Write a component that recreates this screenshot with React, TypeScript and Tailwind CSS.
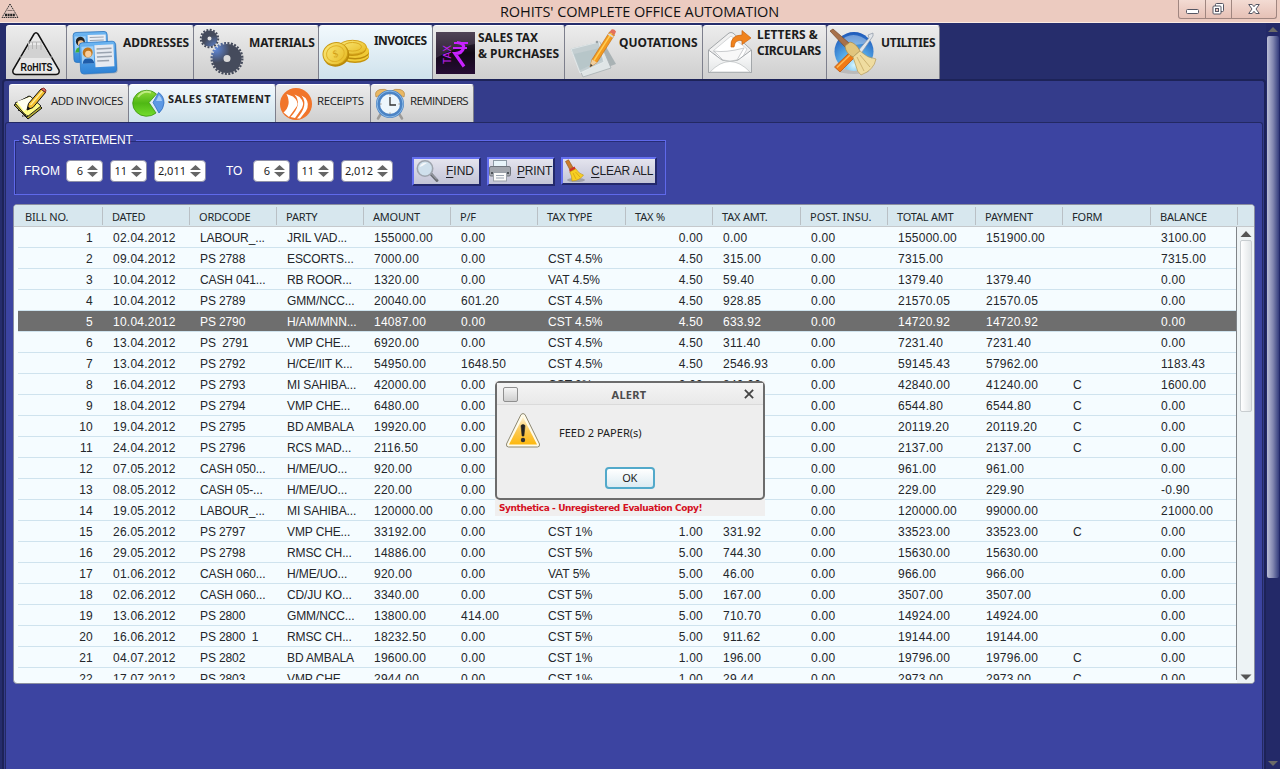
import type { ReactNode } from "react";

type Align = "l" | "r";

const columns: { title: string; width: string; align: Align }[] = [
  { title: "BILL NO.", width: "w-[85px]", align: "r" },
  { title: "DATED", width: "w-[87px]", align: "l" },
  { title: "ORDCODE", width: "w-[87px]", align: "l" },
  { title: "PARTY", width: "w-[87px]", align: "l" },
  { title: "AMOUNT", width: "w-[87px]", align: "l" },
  { title: "P/F", width: "w-[87px]", align: "l" },
  { title: "TAX TYPE", width: "w-[88px]", align: "l" },
  { title: "TAX %", width: "w-[87px]", align: "r" },
  { title: "TAX AMT.", width: "w-[88px]", align: "l" },
  { title: "POST. INSU.", width: "w-[87px]", align: "l" },
  { title: "TOTAL AMT", width: "w-[88px]", align: "l" },
  { title: "PAYMENT", width: "w-[87px]", align: "l" },
  { title: "FORM", width: "w-[88px]", align: "l" },
  { title: "BALANCE", width: "w-[87px]", align: "l" },
];

const rows: string[][] = [
  ["1", "02.04.2012", "LABOUR_...", "JRIL VAD...", "155000.00", "0.00", "", "0.00", "0.00", "0.00", "155000.00", "151900.00", "", "3100.00"],
  ["2", "09.04.2012", "PS 2788", "ESCORTS...", "7000.00", "0.00", "CST 4.5%", "4.50", "315.00", "0.00", "7315.00", "", "", "7315.00"],
  ["3", "10.04.2012", "CASH 041...", "RB ROOR...", "1320.00", "0.00", "VAT 4.5%", "4.50", "59.40", "0.00", "1379.40", "1379.40", "", "0.00"],
  ["4", "10.04.2012", "PS 2789", "GMM/NCC...", "20040.00", "601.20", "CST 4.5%", "4.50", "928.85", "0.00", "21570.05", "21570.05", "", "0.00"],
  ["5", "10.04.2012", "PS 2790", "H/AM/MNN...", "14087.00", "0.00", "CST 4.5%", "4.50", "633.92", "0.00", "14720.92", "14720.92", "", "0.00"],
  ["6", "13.04.2012", "PS  2791", "VMP CHE...", "6920.00", "0.00", "CST 4.5%", "4.50", "311.40", "0.00", "7231.40", "7231.40", "", "0.00"],
  ["7", "13.04.2012", "PS 2792", "H/CE/IIT K...", "54950.00", "1648.50", "CST 4.5%", "4.50", "2546.93", "0.00", "59145.43", "57962.00", "", "1183.43"],
  ["8", "16.04.2012", "PS 2793", "MI SAHIBA...", "42000.00", "0.00", "CST 2%", "2.00", "840.00", "0.00", "42840.00", "41240.00", "C", "1600.00"],
  ["9", "18.04.2012", "PS 2794", "VMP CHE...", "6480.00", "0.00", "", "", "", "0.00", "6544.80", "6544.80", "C", "0.00"],
  ["10", "19.04.2012", "PS 2795", "BD AMBALA", "19920.00", "0.00", "", "", "", "0.00", "20119.20", "20119.20", "C", "0.00"],
  ["11", "24.04.2012", "PS 2796", "RCS MAD...", "2116.50", "0.00", "", "", "", "0.00", "2137.00", "2137.00", "C", "0.00"],
  ["12", "07.05.2012", "CASH 050...", "H/ME/UO...", "920.00", "0.00", "", "", "", "0.00", "961.00", "961.00", "", "0.00"],
  ["13", "08.05.2012", "CASH 05-...", "H/ME/UO...", "220.00", "0.00", "", "", "", "0.00", "229.00", "229.90", "", "-0.90"],
  ["14", "19.05.2012", "LABOUR_...", "MI SAHIBA...", "120000.00", "0.00", "", "", "", "0.00", "120000.00", "99000.00", "", "21000.00"],
  ["15", "26.05.2012", "PS 2797", "VMP CHE...", "33192.00", "0.00", "CST 1%", "1.00", "331.92", "0.00", "33523.00", "33523.00", "C", "0.00"],
  ["16", "29.05.2012", "PS 2798", "RMSC CH...", "14886.00", "0.00", "CST 5%", "5.00", "744.30", "0.00", "15630.00", "15630.00", "", "0.00"],
  ["17", "01.06.2012", "CASH 060...", "H/ME/UO...", "920.00", "0.00", "VAT 5%", "5.00", "46.00", "0.00", "966.00", "966.00", "", "0.00"],
  ["18", "02.06.2012", "CASH 060...", "CD/JU KO...", "3340.00", "0.00", "CST 5%", "5.00", "167.00", "0.00", "3507.00", "3507.00", "", "0.00"],
  ["19", "13.06.2012", "PS 2800", "GMM/NCC...", "13800.00", "414.00", "CST 5%", "5.00", "710.70", "0.00", "14924.00", "14924.00", "", "0.00"],
  ["20", "16.06.2012", "PS 2800  1", "RMSC CH...", "18232.50", "0.00", "CST 5%", "5.00", "911.62", "0.00", "19144.00", "19144.00", "", "0.00"],
  ["21", "04.07.2012", "PS 2802", "BD AMBALA", "19600.00", "0.00", "CST 1%", "1.00", "196.00", "0.00", "19796.00", "19796.00", "C", "0.00"],
  ["22", "17.07.2012", "PS 2803", "VMP CHE...", "2944.00", "0.00", "CST 1%", "1.00", "29.44", "0.00", "2973.00", "2973.00", "C", "0.00"],
];

function RohitsLogo() {
  return (
    <svg width="60" height="54" viewBox="6 25 60 54" className="shrink-0">
      <path d="M34 34Q36 31.500 38 34L59 70Q60 74 56 74.500H16Q12 74 13 70Z" fill="#e9e9e9" stroke="#111" strokeWidth="1.500" />
      <path d="M22.500 56L29 45H43L49.500 56Z" fill="#d2d2d2" />
      <path d="M28.500 50V42H32.500V49M32.500 42H36.500V49M36.500 42H41V50" fill="none" stroke="#b5b5b5" strokeWidth="1" />
      <path d="M20 57H52" stroke="#bbb" />
      <text x="20.500" y="70.500" fontSize="11" fontWeight="700" fontFamily="Liberation Sans, sans-serif" textLength="32" lengthAdjust="spacingAndGlyphs" fill="#111">RoHITS</text>
    </svg>
  );
}

function AddressIcon() {
  return (
    <svg width="52" height="54" viewBox="67 25 52 54" className="shrink-0">
      <defs>
        <linearGradient id="card" x1="0" y1="0" x2="0" y2="1">
          <stop offset="0" stopColor="#6db6f2" />
          <stop offset="1" stopColor="#2f83d6" />
        </linearGradient>
      </defs>
      <g transform="rotate(-2 90 46)">
        <rect x="73.500" y="32" width="34" height="30" rx="3" fill="url(#card)" stroke="#2b74bd" strokeWidth=".8" />
        <rect x="88" y="35" width="18" height="10" fill="#e9eef5" />
        <path d="M90 37.500H104M90 40.500H104" stroke="#9aa3b0" strokeWidth="1.200" />
        <rect x="75" y="36" width="11" height="16" fill="#9fd0f7" />
        <circle cx="80.500" cy="41" r="4.500" fill="#232323" />
        <circle cx="81" cy="43" r="3" fill="#f0c08d" />
        <path d="M75 52Q76 46 82 47V52Z" fill="#3fae3b" />
      </g>
      <g transform="rotate(-3 98 58)">
        <rect x="81" y="43" width="36" height="31" rx="3" fill="#5a7fa8" opacity=".5" />
        <rect x="80" y="42" width="36" height="31" rx="3" fill="url(#card)" stroke="#2d7bc8" strokeWidth=".8" />
        <rect x="95" y="45" width="19" height="22" fill="#e6eaf1" />
        <rect x="82" y="46" width="12" height="17" fill="#9fd0f7" />
        <path d="M97 49H112M97 53H112M97 57H112M97 61H109" stroke="#9aa3b0" strokeWidth="1.500" />
        <circle cx="88" cy="52" r="5" fill="#c2761c" />
        <circle cx="88.500" cy="53.500" r="3.200" fill="#f9cd9b" />
        <path d="M82.500 63Q83 57.500 88 58Q93.500 57.500 94 63Z" fill="#1f5ca8" />
      </g>
    </svg>
  );
}

function GearsIcon() {
  return (
    <svg width="52" height="54" viewBox="194 25 52 54" className="shrink-0">
      <defs>
        <radialGradient id="gearshine" cx="216" cy="49" r="14" gradientUnits="userSpaceOnUse">
          <stop offset="0" stopColor="#5f88da" />
          <stop offset="1" stopColor="#454b5c" />
        </radialGradient>
      </defs>
      <circle cx="209.500" cy="38.500" r="5" fill="none" stroke="url(#gearshine)" strokeWidth="6" />
      <circle cx="209.500" cy="38.500" r="8.700" fill="none" stroke="#454b5c" strokeWidth="2" strokeDasharray="1.900 1.516" />
      <circle cx="227" cy="58.500" r="9" fill="none" stroke="url(#gearshine)" strokeWidth="11" />
      <circle cx="227" cy="58.500" r="15.300" fill="none" stroke="url(#gearshine)" strokeWidth="2.400" strokeDasharray="2 1.433" />
    </svg>
  );
}

function CoinsIcon() {
  return (
    <svg width="52" height="54" viewBox="319 25 52 54" className="shrink-0">
      <defs>
        <linearGradient id="coin" x1="0" y1="0" x2="1" y2="1">
          <stop offset="0" stopColor="#fbea7c" />
          <stop offset="1" stopColor="#e6b81e" />
        </linearGradient>
      </defs>
      <ellipse cx="355" cy="56" rx="14" ry="7" fill="#c6940c" />
      <ellipse cx="355" cy="54.500" rx="14" ry="7" fill="#f1cc3a" />
      <ellipse cx="355" cy="52.500" rx="14" ry="7" fill="#bb8b0c" />
      <ellipse cx="355" cy="51" rx="14" ry="7" fill="#f0c935" />
      <ellipse cx="352" cy="49" rx="14" ry="7" fill="#c6940c" />
      <ellipse cx="352.500" cy="47.300" rx="14" ry="7" fill="url(#coin)" stroke="#d3a11b" />
      <ellipse cx="352.500" cy="46.800" rx="9" ry="4.300" fill="none" stroke="#dba91e" />
      <g transform="rotate(-17 336 54)">
        <ellipse cx="336" cy="55.500" rx="13" ry="11" fill="#b98908" />
        <ellipse cx="335.500" cy="53.500" rx="12.500" ry="11" fill="url(#coin)" stroke="#c99a14" />
        <ellipse cx="335.500" cy="53.500" rx="9" ry="7.800" fill="none" stroke="#e0b229" />
        <text x="333" y="57" fontSize="10" fontFamily="Liberation Serif, serif" fill="#d19d14">$</text>
      </g>
    </svg>
  );
}

function TaxIcon() {
  return (
    <svg width="43" height="54" viewBox="433 25 43 54" className="shrink-0">
      <defs>
        <linearGradient id="taxbg" x1="0" y1="0" x2="0" y2="1">
          <stop offset="0" stopColor="#3b3140" />
          <stop offset=".5" stopColor="#120816" />
          <stop offset="1" stopColor="#260c35" />
        </linearGradient>
      </defs>
      <rect x="436" y="32" width="39" height="42" fill="url(#taxbg)" />
      <path d="M436 32H475V44Q455 47 436 58Z" fill="#80708a" opacity=".3" />
      <g fill="none" stroke="#c822ff">
        <path d="M454 43H468M453 48H467" strokeWidth="2" />
        <path d="M457 42.500Q464.500 43 463.500 48Q462 53.500 455 53.500L464 66.500" strokeWidth="3.200" />
      </g>
      <text transform="translate(450.500 64) rotate(-90)" fontSize="10" fontFamily="Liberation Sans, sans-serif" fill="#c020f0" textLength="19">TAX</text>
    </svg>
  );
}

function NotesIcon() {
  return (
    <svg width="52" height="54" viewBox="565 25 52 54" className="shrink-0">
      <path d="M580 52L605 45L616 64L589 74Z" fill="#a9b2b4" />
      <path d="M571 49L600 42L611 68L583 77Z" fill="#dfe5e6" stroke="#a7b0b2" strokeWidth=".8" />
      <path d="M571 49L599 42L604 62L580 73Z" fill="#c3ced1" stroke="#e9eff0" strokeWidth=".8" />
      <path d="M574 54L600 48L602 60L580 70Z" fill="#acbdc2" opacity=".5" />
      <path d="M590 67L592 59.500L609.500 32L614.500 35L597 62.500Z" fill="#f39a1f" stroke="#bf6c10" strokeWidth=".6" />
      <path d="M594 60.500L611.500 33.200" stroke="#ffcf57" strokeWidth="1.400" />
      <path d="M590 67L592 59.500L597 62.500Z" fill="#efcfa0" />
      <path d="M590 67L590.700 64L592.600 65.200Z" fill="#333" />
      <path d="M609.500 32L611.500 29.500Q614 28.500 616 31.500L614.500 35Z" fill="#e4705c" />
      <path d="M608.300 34L613.300 37" stroke="#d8d8d8" strokeWidth="2" />
      <circle cx="597" cy="42" r="1.300" fill="#98a0a3" />
    </svg>
  );
}

function EnvelopeIcon() {
  return (
    <svg width="50" height="54" viewBox="703 25 50 54" className="shrink-0">
      <defs>
        <linearGradient id="env" x1="0" y1="0" x2="0" y2="1">
          <stop offset="0" stopColor="#fff" />
          <stop offset="1" stopColor="#e3e5e6" />
        </linearGradient>
      </defs>
      <path d="M708.500 50L729 33Q731 32 733 33L751.500 50V72.500H708.500Z" fill="#f1f1f1" stroke="#a3a7aa" />
      <path d="M713 51L731 36L747 49L741 60H720Z" fill="#fff" stroke="#c3c6c8" strokeWidth=".7" />
      <path d="M708.500 50L722 60Q730 63 738 60L751.500 50V72.500H708.500Z" fill="url(#env)" stroke="#a3a7aa" />
      <path d="M710 72Q730 51 750 72Z" fill="#fff" stroke="#c2c5c7" strokeWidth=".8" />
      <path d="M714 51Q725 53 744 48L737 60Q730 62 723 60Z" fill="#f8f8f8" stroke="#b5b8ba" strokeWidth=".7" />
      <path d="M731 47Q730 35 742 35V30.500L751 38L742 44.500V40.500Q735 39 734 47Z" fill="#f0831e" stroke="#c96411" strokeWidth=".7" />
    </svg>
  );
}

function UtilitiesIcon() {
  return (
    <svg width="52" height="54" viewBox="827 25 52 54" className="shrink-0">
      <defs>
        <radialGradient id="globe" cx=".5" cy=".85" r=".9">
          <stop offset="0" stopColor="#d5f5ff" />
          <stop offset=".35" stopColor="#5db5ee" />
          <stop offset="1" stopColor="#174fb4" />
        </radialGradient>
      </defs>
      <ellipse cx="854" cy="71" rx="15" ry="3" fill="#aaa" opacity=".6" />
      <circle cx="854" cy="51.500" r="19.500" fill="url(#globe)" />
      <path d="M839 42Q853 28 869 42Q855 48 839 42Z" fill="#fff" opacity=".35" />
      <path d="M857 52L869 38L868 35L873 33L873 36L860 55Z" fill="#e1e5ea" stroke="#8b96a5" strokeWidth=".7" />
      <path d="M834.500 67L849 53L854 58L840 72Z" fill="#f07a16" stroke="#b5520c" strokeWidth=".7" />
      <path d="M837 67.500L850 55" stroke="#ffbb55" strokeWidth="1.500" />
      <path d="M830 31L833 29L849 43L845 47Z" fill="#a8714a" stroke="#774a2b" strokeWidth=".7" />
      <path d="M845 46L850 42Q856 43 860 51L853 57Q846 54 845 46Z" fill="#e1c57d" stroke="#a98a47" strokeWidth=".7" />
      <path d="M853 57L860 51Q867 58 876 59Q874 70 861 75Q857 72 856 66Z" fill="#efdca0" stroke="#b99d5a" strokeWidth=".7" />
      <path d="M857 57L864 71M860 55L870 67" stroke="#c4a864" strokeWidth=".8" />
    </svg>
  );
}

function PencilNoteIcon() {
  return (
    <svg width="40" height="38" viewBox="9 84 40 38" className="shrink-0">
      <path d="M14 105L29 96L42 108L28 119Z" fill="#b9ae31" stroke="#111" />
      <path d="M15 103L30 96L41 106L27 117Z" fill="#fffd86" stroke="#222" />
      <path d="M17 101.500L30 97L37 103L24 111Z" fill="#fffff0" />
      <path d="M27 110L28.500 103.500L41 89L45.500 92.500L33 107.500Z" fill="#f2bd2d" stroke="#111" />
      <path d="M30.500 105L42.500 91" stroke="#fff09a" strokeWidth="1.300" />
      <path d="M41 89Q44 86.500 46 90L45.500 92.500Z" fill="#e36f63" stroke="#6e1d18" strokeWidth=".8" />
      <path d="M27 110L28 106.500L30.500 108.500Z" fill="#111" />
      <path d="M18 110L28 116M22 116H26" stroke="#111" strokeDasharray="1.500 1" />
    </svg>
  );
}

function PieIcon() {
  return (
    <svg width="38" height="38" viewBox="129 84 38 38" className="shrink-0">
      <defs>
        <linearGradient id="pie" x1="0" y1="0" x2="0" y2="1">
          <stop offset="0" stopColor="#8fd93a" />
          <stop offset=".5" stopColor="#4fb814" />
          <stop offset="1" stopColor="#74dd2e" />
        </linearGradient>
      </defs>
      <path d="M149 102.500L156.500 94A14 13 0 1 0 156 113Z" fill="url(#pie)" stroke="#3c9612" strokeWidth=".8" />
      <path d="M138 97Q143 90 151 92.500" fill="none" stroke="#d8f7a4" strokeWidth="2" opacity=".7" />
      <path d="M153 102.500L158.500 92.500Q164 96 164 103Q163.500 109 159 113Z" fill="#5d99e4" stroke="#2f6dc0" strokeWidth=".8" />
      <path d="M156 101L159 95Q162 98 162 101Z" fill="#b6d7fa" opacity=".8" />
    </svg>
  );
}

function ReceiptsIcon() {
  return (
    <svg width="40" height="38" viewBox="276 84 40 38" className="shrink-0">
      <circle cx="296" cy="104" r="16" fill="#f1752b" />
      <path d="M286.500 94L293 96.500Q299 101.500 297 106L289 117L283.500 112.500Q292 105 286.500 94Z" fill="#fff" />
      <path d="M294.500 94.500L299.500 97Q305 102.500 302 108L295 118L290.500 117Q303 104 294.500 94.500Z" fill="#fff" />
      <path d="M301.500 95.500L305.500 98Q310 104 306 111L300 118.500L297 118.500Q309 105 301.500 95.500Z" fill="#fff" />
    </svg>
  );
}

function ClockIcon() {
  return (
    <svg width="38" height="38" viewBox="371 84 38 38" className="shrink-0">
      <path d="M382 112L378 118.500M398 112L402 118.500" stroke="#9d9b98" strokeWidth="2.500" strokeLinecap="round" />
      <path d="M376 97Q374 91 380 89.500Q386 88.500 388 91Z" fill="#e9b864" stroke="#b58640" strokeWidth=".7" />
      <path d="M404 97Q406 91 400 89.500Q394 88.500 392 91Z" fill="#e9b864" stroke="#b58640" strokeWidth=".7" />
      <circle cx="390" cy="104" r="12" fill="#edf6fc" stroke="#4b83c4" strokeWidth="4" />
      <circle cx="390" cy="104" r="13" fill="none" stroke="#8bbbe8" strokeWidth="1" />
      <path d="M390 97V105H396" fill="none" stroke="#333" strokeWidth="1.300" />
      <path d="M390 94V95.500M390 112.500V114M380 104H381.500M398.500 104H400" stroke="#888" />
    </svg>
  );
}

function FindIcon() {
  return (
    <svg width="26" height="26" viewBox="416 157 26 26" className="shrink-0">
      <path d="M433 173L439 179.500" stroke="#6a6d74" strokeWidth="3" strokeLinecap="round" />
      <path d="M433 172.500L439 178.500" stroke="#b3b6bd" strokeWidth="1" />
      <circle cx="427" cy="167.500" r="7.700" fill="#cfe0ec" stroke="#9fa5ae" strokeWidth="1.600" />
      <path d="M421.500 166Q424 161 429 162Q425 165 421.500 166Z" fill="#fff" opacity=".8" />
    </svg>
  );
}

function PrintIcon() {
  return (
    <svg width="24" height="26" viewBox="489 157 24 26" className="shrink-0">
      <rect x="493.500" y="159.500" width="13" height="9" fill="#e8f4fa" stroke="#8d9aa5" />
      <rect x="489.500" y="165.500" width="21" height="9.500" rx="1.500" fill="#a2a6ad" stroke="#70757d" />
      <rect x="491" y="171" width="18" height="2" fill="#4f545a" />
      <rect x="493.500" y="171.500" width="13" height="8.500" fill="#fafafa" stroke="#9ba1a9" />
      <path d="M496 174.500H504M496 177H504" stroke="#9aa5b1" />
    </svg>
  );
}

function BroomIcon() {
  return (
    <svg width="24" height="26" viewBox="563 157 24 26" className="shrink-0">
      <ellipse cx="576" cy="179" rx="9" ry="2" fill="#777" opacity=".5" />
      <path d="M565.500 160.500L568.500 158.800L573 166.500L569.500 168Z" fill="#cc7e2c" stroke="#8b4f16" strokeWidth=".6" />
      <path d="M569 168.500L574.500 165.500L576 168.500L570 171.500Z" fill="#cf3322" />
      <path d="M569.800 171L575.800 167.800Q579 173 583.500 174Q580 179.500 572 180Q572 175 569.800 171Z" fill="#f7cf22" stroke="#c29410" strokeWidth=".6" />
      <path d="M573 172L576 178M575.500 171L580 176" stroke="#cf9c12" strokeWidth=".7" />
    </svg>
  );
}

function MainTab({ width, icon, label, text, active }: { width: string; icon: ReactNode; label?: ReactNode; text?: string; active?: boolean }) {
  const tone = active ? "from-[#f2f9fd] to-[#cfe2ec]" : "from-[#ececec] to-[#cfcfcf]";
  return (
    <div className={`flex h-[54px] shrink-0 items-start overflow-hidden rounded-t-[3px] border-t border-r border-t-white border-r-[#7d7f8c] bg-linear-to-b ${tone} ${width}`}>
      <div className="-mt-px flex">{icon}</div>
      {label && <div className={`font-['Noto_Sans'] text-[12px] leading-4 font-bold whitespace-nowrap text-[#1c1c1c] ${text}`}>{label}</div>}
    </div>
  );
}

function SubTab({ width, icon, label, text, active }: { width: string; icon: ReactNode; label: string; text: string; active?: boolean }) {
  const tone = active ? "from-[#f2f9fd] to-[#cfe2ec]" : "from-[#ececec] to-[#cfcfcf]";
  return (
    <div className={`flex h-[38px] shrink-0 items-start overflow-hidden rounded-t-[3px] border-t border-r border-t-white border-r-[#7d7f8c] bg-linear-to-b ${tone} ${width}`}>
      <div className="-mt-px flex">{icon}</div>
      <div className={`leading-4 whitespace-nowrap text-[#222] ${text}`}>{label}</div>
    </div>
  );
}

function Spinner({ value, width, gap }: { value: string; width: string; gap: string }) {
  return (
    <div className={`flex h-[22px] shrink-0 items-center justify-end rounded-[4px] border border-[#8e90a8] bg-white pr-[4px] font-['Noto_Sans'] text-[11px] text-[#1c1c1c] ${width} ${gap}`}>
      <span>{value}</span>
      <svg width="11" height="12" viewBox="0 0 11 12" className="ml-[4px]">
        <path d="M5.500 0L11 5H0ZM0 7H11L5.500 12Z" fill="#666" />
      </svg>
    </div>
  );
}

function ToolButton({ icon, first, rest, width, gap, height, text }: { icon: ReactNode; first: string; rest: string; width: string; gap: string; height: string; text: string }) {
  return (
    <button className={`flex shrink-0 items-center overflow-hidden border-2 border-t-[#6570f0] border-r-[#23286b] border-b-[#23286b] border-l-[#6570f0] bg-linear-to-b from-[#e4e4ee] to-[#c3c4d6] font-['Liberation_Sans'] text-[12px] text-[#1c1c24] ${width} ${gap} ${height}`}>
      {icon}
      <span className={`whitespace-nowrap ${text}`}>
        <span className="underline underline-offset-2">{first}</span>
        {rest}
      </span>
    </button>
  );
}

function BillTable() {
  return (
    <div className="mt-[9px] ml-[7px] flex h-[480px] w-[1242px] flex-col overflow-hidden rounded-[4px] border border-[#8b8fa0] bg-[#f5fcff]">
      <div className="flex h-[22px] shrink-0 border-b border-[#c5c9cc] bg-[#d7e7ee] pl-[4px] font-['Noto_Sans'] text-[11px] leading-[24px] tracking-[-0.2px] text-[#22282c]">
        {columns.map((c, i) => (
          <div key={c.title} className={`flex shrink-0 ${c.width}`}>
            <span className={`flex-1 whitespace-nowrap ${i === 0 ? "pl-[7px]" : "pl-[9px]"} ${i === 9 ? "tracking-[0px]" : ""}`}>{c.title}</span>
            <span className="mt-[2px] h-[18px] w-px bg-[#b9c0c5]" />
          </div>
        ))}
      </div>
      <div className="flex min-h-0 flex-1">
        <div className="mb-[3px] ml-[4px] w-[1218px] shrink-0 overflow-hidden font-['Liberation_Sans'] text-[12px]">
          {rows.map((r) => (
            <div key={r[0]} className={`flex h-[21px] border-b border-[#cfe3ee] leading-[22px] ${r[0] === "5" ? "bg-[#6e6e6e] text-white" : "text-[#23262a]"}`}>
              {r.map((cell, i) => (
                <div
                  key={i}
                  className={`h-[20px] shrink-0 whitespace-pre ${columns[i].width} ${columns[i].align === "r" ? "pr-[10px] text-right" : "pl-[10px]"} ${i === 2 || i === 3 ? "tracking-[-0.12px]" : i === 6 ? "tracking-[0px]" : "tracking-[0.25px]"}`}
                >
                  {cell}
                </div>
              ))}
            </div>
          ))}
        </div>
        <div className="mb-[3px] w-px shrink-0 bg-[#808488]" />
        <div className="flex flex-1 flex-col items-center bg-[#edf3f5] pl-px">
          <svg width="12" height="13" viewBox="0 0 12 13" className="shrink-0"><path d="M6 4L11.500 10H.5Z" fill="#555" /></svg>
          <div className="h-[172px] w-[12px] shrink-0 rounded-[2px] border border-[#c8cdd0] bg-linear-to-r from-white to-[#e2e6e8]" />
          <div className="flex-1" />
          <svg width="12" height="12" viewBox="0 0 12 12" className="shrink-0"><path d="M.5 3.500H11.500L6 9Z" fill="#555" /></svg>
        </div>
      </div>
    </div>
  );
}

function AlertDialog() {
  return (
    <div className="absolute top-[381px] left-[495px] w-[270px] bg-[#f0efef]">
      <div className="flex h-[119px] flex-col rounded-[5px] border-2 border-[#6c6c6c] bg-[#eeeeee]">
        <div className="flex h-[22px] items-center border-b border-[#dadada] bg-linear-to-b from-[#f4f4f4] to-[#e9e9e9] pt-px pr-[9px] pl-[6px]">
          <span className="h-[15px] w-[15px] rounded-[2px] border border-[#8f8f8f] bg-linear-to-b from-[#f5f5f5] to-[#cfcfcf]" />
          <span className="flex-1 pr-[4px] pt-px text-center font-['Noto_Sans'] text-[11px] leading-4 font-bold tracking-[0.3px] text-[#4c4c4c]">ALERT</span>
          <svg width="10" height="10" viewBox="0 0 9 9"><path d="M.8.8L8.200 8.200M8.200.8L.8 8.200" stroke="#444" strokeWidth="1.600" /></svg>
        </div>
        <div className="flex h-[62px] items-start pl-[8px]">
          <svg width="36" height="36" viewBox="0 0 36 36" className="mt-[7px]">
            <defs>
              <linearGradient id="warn" x1="0" y1="0" x2="0" y2="1">
                <stop offset="0" stopColor="#fff1cf" />
                <stop offset=".5" stopColor="#fbc954" />
                <stop offset="1" stopColor="#fdb80e" />
              </linearGradient>
            </defs>
            <path d="M16 2.500Q18 .5 20 2.500L34.500 32Q35 35 32.500 35H3.500Q1 35 1.500 32Z" fill="#fffbe9" stroke="#8d8873" />
            <path d="M18 5L32 32.500H4Z" fill="url(#warn)" />
            <path d="M16 13.500Q18 11.500 20 13.500L18.900 24H17.100Z" fill="#222" stroke="#222" strokeWidth=".6" />
            <circle cx="18" cy="28" r="2.200" fill="#333" />
          </svg>
          <span className="mt-[20px] ml-[18px] font-['Noto_Sans'] text-[11px] leading-4 text-[#1c1c1c]">FEED 2 PAPER(s)</span>
        </div>
        <div className="flex justify-center">
          <button className="h-[22px] w-[50px] rounded-[4px] border-2 border-[#52a9ca] bg-linear-to-b from-white to-[#dcebf2] pr-px font-['Noto_Sans'] text-[11px] leading-[18px] tracking-[-0.5px] text-[#1c1c1c]">OK</button>
        </div>
      </div>
      <div className="h-4 pl-[4px] font-['DejaVu_Sans'] text-[9px] leading-4 font-bold tracking-[-0.4px] whitespace-nowrap text-[#d40f22]">Synthetica - Unregistered Evaluation Copy!</div>
    </div>
  );
}

export default function App() {
  return (
    <div className="relative flex h-[769px] w-[1280px] flex-col overflow-hidden bg-[#262d6c]">
      <header className="flex h-[23px] shrink-0 items-start border-b border-[#f9e9e2] bg-[#eccbc0]">
        <svg width="20" height="20" viewBox="0 0 20 20" className="shrink-0">
          <path d="M10 4L18 17.500H2Z" fill="#e3c8c0" stroke="#333" strokeWidth="1" strokeDasharray="1.500 .7" />
          <path d="M7.500 10.500H12.500" stroke="#8c7772" />
          <path d="M5 15H15" stroke="#222" strokeWidth="2.500" strokeDasharray="2 .6" />
        </svg>
        <h1 className="w-[1158px] shrink-0 pl-[480px] font-['Open_Sans'] text-[14.5px] leading-[24px] tracking-[-0.09px] whitespace-nowrap text-[#111]">ROHITS&apos; COMPLETE OFFICE AUTOMATION</h1>
        <div className="flex h-[19px] w-[99px] shrink-0 rounded-b-[3px] border border-t-0 border-[#a08680] bg-linear-to-b from-[#f3dbd3] to-[#e6c1b6]">
          <div className="flex w-[27px] justify-center border-r border-[#a08680]">
            <svg width="13" height="18" viewBox="0 0 13 18"><rect x=".5" y="9.500" width="12" height="4" rx="1" fill="#fff" stroke="#555663" /></svg>
          </div>
          <div className="flex w-[26px] justify-center border-r border-[#a08680]">
            <svg width="13" height="18" viewBox="0 0 13 18">
              <rect x="3.500" y="3.500" width="8" height="8" rx="1" fill="#fff" stroke="#555663" />
              <rect x="1" y="6" width="8" height="8" rx="1" fill="#fff" stroke="#555663" />
              <rect x="3.500" y="8.500" width="3" height="3" fill="#eccbc0" stroke="#555663" />
            </svg>
          </div>
          <div className="flex flex-1 justify-center">
            <svg width="12" height="18" viewBox="0 0 12 18">
              <path d="M.7 4.500H4.200L6 6.700L7.800 4.500H11.300L8 9L11.300 13.500H7.800L6 11.300L4.200 13.500H.7L4 9Z" fill="#fff" stroke="#555663" strokeLinejoin="round" />
            </svg>
          </div>
        </div>
      </header>

      <div className="flex min-h-0 flex-1">
        <div className="flex w-[1266px] shrink-0 flex-col">
          <nav className="mt-[2px] flex pl-[6px]">
            <MainTab width="w-[61px]" icon={<RohitsLogo />} />
            <MainTab width="w-[127px]" icon={<AddressIcon />} label="ADDRESSES" text="pt-[9px] pl-[4px] tracking-[-0.1px]" />
            <MainTab width="w-[125px]" icon={<GearsIcon />} label="MATERIALS" text="pt-[9px] pl-[3px] tracking-[-0.1px]" />
            <MainTab width="w-[114px]" icon={<CoinsIcon />} label="INVOICES" text="pt-[7px] pl-[3px] tracking-[-0.6px]" active />
            <MainTab width="w-[132px]" icon={<TaxIcon />} label={<>SALES TAX<br />&amp; PURCHASES</>} text="pt-[4px] pl-[2px] tracking-[-0.05px]" />
            <MainTab width="w-[138px]" icon={<NotesIcon />} label="QUOTATIONS" text="pt-[9px] pl-[2px]" />
            <MainTab width="w-[124px]" icon={<EnvelopeIcon />} label={<>LETTERS &amp;<br /><span className="tracking-[-0.3px]">CIRCULARS</span></>} text="pt-[1px] pl-[4px]" />
            <MainTab width="w-[113px]" icon={<UtilitiesIcon />} label="UTILITIES" text="pt-[9px] pl-[2px] tracking-[-0.3px]" />
          </nav>

          <main className="ml-[2px] flex min-h-0 flex-1 flex-col rounded-t-[4px] border-2 border-b-0 border-[#1d2358] bg-[#343c8b]">
            <nav className="mt-[3px] flex pl-[5px]">
              <SubTab width="w-[120px]" icon={<PencilNoteIcon />} label="ADD INVOICES" text="pt-[8px] pl-[2px] font-['Open_Sans'] text-[11.5px] tracking-[-0.5px]" />
              <SubTab width="w-[147px]" icon={<PieIcon />} label="SALES STATEMENT" text="pt-[6px] pl-[1px] font-['Noto_Sans'] text-[11px] font-bold tracking-[0.35px]" active />
              <SubTab width="w-[95px]" icon={<ReceiptsIcon />} label="RECEIPTS" text="pt-[8px] pl-[1px] font-['Open_Sans'] text-[11.5px] tracking-[-0.4px]" />
              <SubTab width="w-[103px]" icon={<ClockIcon />} label="REMINDERS" text="pt-[8px] pl-[1px] font-['Open_Sans'] text-[11.5px] tracking-[-0.65px]" />
            </nav>

            <section className="mx-px flex min-h-0 flex-1 flex-col rounded-t-[3px] border border-b-0 border-[#232963] bg-[#3c44a1]">
              <fieldset className="mt-[10px] ml-[8px] flex h-[62px] w-[652px] flex-col border border-[#5f69ea] shadow-[inset_1px_1px_0_#262c78]">
                <legend className="ml-[4px] h-[14px] px-[3px] font-['Liberation_Sans'] text-[12px] leading-[14px] tracking-[-0.15px] text-white">SALES STATEMENT</legend>
                <div className="mt-[9px] flex h-[30px] items-center pl-[9px] font-['Liberation_Sans'] text-[12px] text-white">
                  <span className="w-[42px] shrink-0 tracking-[0.2px]">FROM</span>
                  <Spinner value="6" width="w-[37px]" gap="" />
                  <Spinner value="11" width="w-[37px]" gap="ml-[7px]" />
                  <Spinner value="2,011" width="w-[52px]" gap="ml-[7px]" />
                  <span className="ml-[20px] w-[27px] shrink-0">TO</span>
                  <Spinner value="6" width="w-[37px]" gap="" />
                  <Spinner value="11" width="w-[37px]" gap="ml-[7px]" />
                  <Spinner value="2,012" width="w-[52px]" gap="ml-[7px]" />
                  <ToolButton icon={<FindIcon />} first="F" rest="IND" width="w-[69px]" gap="ml-[19px]" height="h-[29px]" text="pl-[6px]" />
                  <ToolButton icon={<PrintIcon />} first="P" rest="RINT" width="w-[68px]" gap="ml-[6px]" height="h-[29px]" text="pl-[4px] tracking-[-0.2px]" />
                  <ToolButton icon={<BroomIcon />} first="C" rest="LEAR ALL" width="w-[96px]" gap="ml-[6px]" height="h-[28px]" text="pl-[4px] tracking-[-0.2px]" />
                </div>
              </fieldset>
              <BillTable />
            </section>
          </main>
        </div>

        <div className="flex w-[14px] shrink-0 flex-col items-center bg-[#232968]">
          <svg width="12" height="13" viewBox="0 0 12 13" className="shrink-0"><path d="M6 4L11 9H1Z" fill="#6b6b68" /></svg>
          <div className="h-[542px] w-[12px] shrink-0 rounded-[2px] bg-linear-to-r from-[#bcbfd6] via-[#8287b0] to-[#353c7c]" />
          <div className="flex-1" />
          <svg width="12" height="12" viewBox="0 0 12 12" className="shrink-0"><path d="M1 4H11L6 9Z" fill="#6b6b68" /></svg>
        </div>
      </div>

      <AlertDialog />
    </div>
  );
}
